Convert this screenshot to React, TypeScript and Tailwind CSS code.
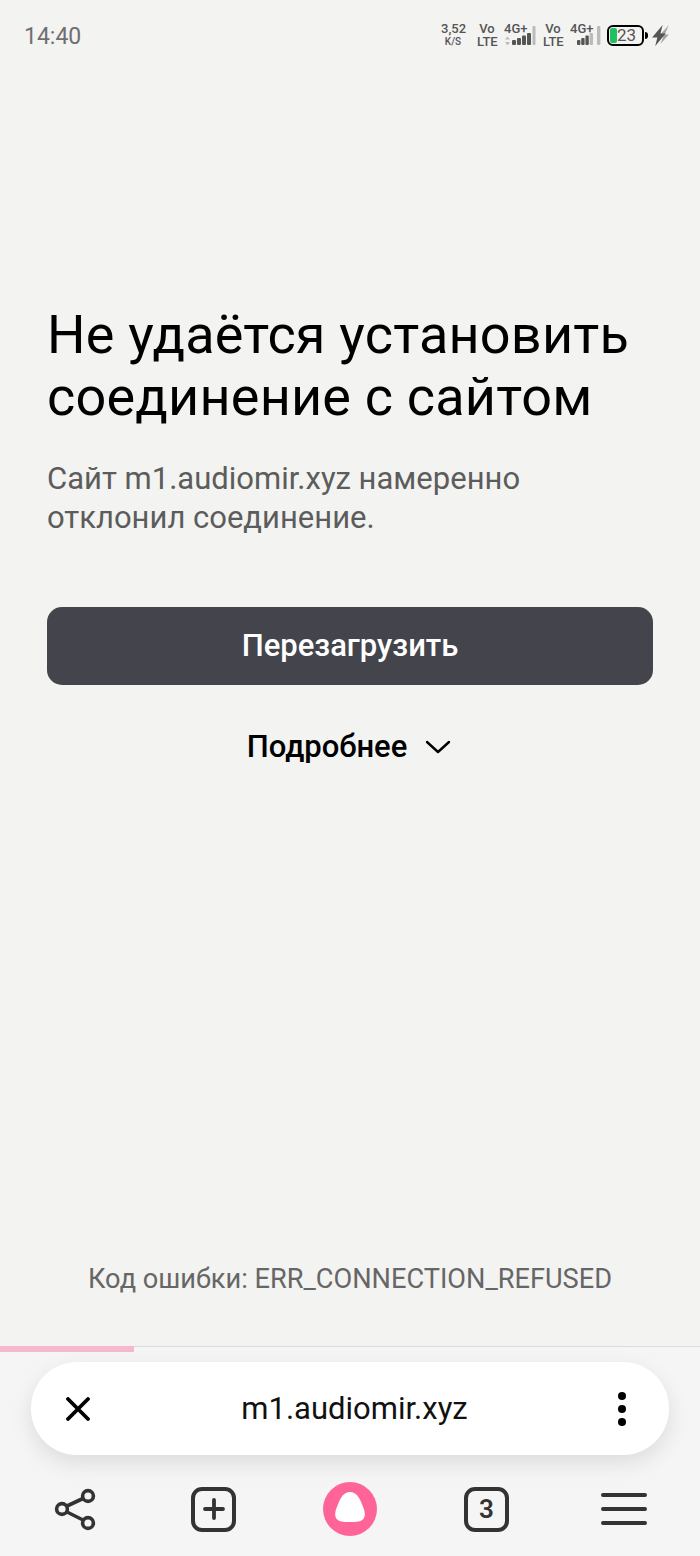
const font = "font-['Roboto',sans-serif]";

const Signal = ({ first }: { first: boolean }) => (
  <div className="relative ml-[7px] h-[26px] w-[32px]">
    <span className="absolute left-0 top-0">4G+</span>
    <svg className="absolute left-0 top-0" width="32" height="26" viewBox="0 0 32 26">
      {first ? (
        <>
          <path d="M3.5 14.5 L6 17.5 H1 Z M3.5 23.5 L6 20 H1 Z" fill="#bbb" />
          <rect x="8" y="18" width="4" height="5" rx="1" fill="#555" />
          <rect x="13" y="16" width="4" height="7" rx="1" fill="#555" />
          <rect x="18" y="13.5" width="4" height="9.5" rx="1" fill="#555" />
          <rect x="23" y="11" width="4" height="12" rx="1" fill="#555" />
          <rect x="28.5" y="4" width="3" height="19" rx="1" fill="#bbb" />
        </>
      ) : (
        <>
          <rect x="7" y="18" width="3.4" height="5" rx="1" fill="#555" />
          <rect x="11.2" y="16" width="3.4" height="7" rx="1" fill="#555" />
          <rect x="15.4" y="13.5" width="3.4" height="9.5" rx="1" fill="#555" />
          <rect x="19.6" y="11" width="3.4" height="12" rx="1" fill="#bbb" />
          <rect x="27" y="4" width="3.4" height="19" rx="1" fill="#bbb" />
        </>
      )}
    </svg>
  </div>
);

const StatusBar = () => (
  <div className="flex h-[70px] items-center justify-between pl-6 pr-[31px]">
    <span className="mt-[2px] text-[23px] leading-none text-[#6f6f6f]">14:40</span>
    <div className="flex items-center text-[#555] text-[13px] leading-[13px] font-medium">
      <div className="w-[24px] text-center whitespace-nowrap">
        3,52
        <div className="text-[10px] leading-[13px]">K/S</div>
      </div>
      <div className="ml-[12px] w-[20px] text-center">Vo<br />LTE</div>
      <Signal first />
      <div className="ml-[7px] w-[20px] text-center">Vo<br />LTE</div>
      <Signal first={false} />
      <div className="relative ml-[5px] flex h-[21px] w-[37px] items-center rounded-[6px] border-2 border-black">
        <div className="ml-[1px] h-[15px] w-[7px] rounded-[2px] bg-[#22c063]" />
        <span className="absolute left-[8px] text-[17px] font-normal leading-none text-[#555]">23</span>
      </div>
      <div className="ml-[1px] h-[7px] w-[3px] rounded-r-sm bg-black" />
      <svg className="ml-[4px]" width="17" height="21" viewBox="0 0 16 20">
        <path d="M16 0 L7 10 H11 L8 18 L16 9 H12 Z" fill="#a5a5a5" />
        <path d="M10 0 L0 12 H5 L3 20 L13 8 H8 Z" fill="#555" />
      </svg>
    </div>
  </div>
);

const Address = () => (
  <div className="relative z-10 mx-[31px] mt-[10px] flex h-[93px] items-center justify-between rounded-[46px] bg-white pl-[35px] pr-[43px] shadow-[0_8px_22px_rgba(0,0,0,0.10)]">
    <svg width="24" height="24" viewBox="0 0 24 24" fill="none" stroke="#000" strokeWidth="3.8" strokeLinecap="round">
      <path d="M2 2 L22 22 M22 2 L2 22" />
    </svg>
    <span className="ml-[1px] text-[31px] leading-none text-[#111]">m1.audiomir.xyz</span>
    <div className="flex flex-col gap-[5px]">
      <div className="h-[8px] w-[8px] rounded-full bg-black" />
      <div className="h-[8px] w-[8px] rounded-full bg-black" />
      <div className="h-[8px] w-[8px] rounded-full bg-black" />
    </div>
  </div>
);

const Toolbar = () => (
  <div className="mt-[27px] flex items-center pl-[54px] text-[#333]">
    <svg width="44" height="44" viewBox="0 0 44 44" fill="none" stroke="#333" strokeWidth="3.6">
      <circle cx="34" cy="9" r="5.4" />
      <circle cx="8" cy="22" r="5.4" />
      <circle cx="34" cy="36" r="5.4" />
      <path d="M13 19 L29 11.5 M13 25 L29 33" />
    </svg>
    <div className="ml-[93px] flex h-[45px] w-[45px] items-center justify-center rounded-[11px] border-[4px] border-[#333]">
      <svg width="22" height="22" viewBox="0 0 22 22" stroke="#333" strokeWidth="3.8" strokeLinecap="round">
        <path d="M11 2 V20 M2 11 H20" />
      </svg>
    </div>
    <svg className="ml-[87px]" width="54" height="54" viewBox="0 0 54 54">
      <circle cx="27" cy="27" r="27" fill="#ff6498" />
      <path d="M27 10 C33 10 36 15 38.5 21 C41 27 43 32 41 36 C39 40 33 40 27 40 C21 40 15 40 13 36 C11 32 13 27 15.5 21 C18 15 21 10 27 10 Z" fill="#fff" />
    </svg>
    <div className="ml-[87px] flex h-[45px] w-[45px] items-center justify-center rounded-[11px] border-[4px] border-[#333] text-[26px] font-semibold leading-none">3</div>
    <div className="ml-[92px] flex w-[46px] flex-col gap-[10px]">
      <div className="h-[4px] rounded-full bg-[#333]" />
      <div className="h-[4px] rounded-full bg-[#333]" />
      <div className="h-[4px] rounded-full bg-[#333]" />
    </div>
  </div>
);

export default function App() {
  return (
    <div className={`flex h-[1556px] w-[700px] flex-col overflow-hidden bg-[#f3f3f1] ${font}`}>
      <StatusBar />
      <div className="flex-1 px-[47px] pt-[234px]">
        <h1 className="text-[54px] font-normal leading-[62px] text-black tracking-[0.2px] whitespace-nowrap">
          Не удаётся установить
          <br />
          соединение с сайтом
        </h1>
        <p className="mt-[31px] text-[31px] leading-[39px] text-[#5c5c5c]">
          Сайт m1.audiomir.xyz намеренно
          <br />
          отклонил соединение.
        </p>
        <button className="mt-[70px] flex h-[78px] w-[606px] items-center justify-center rounded-[15px] bg-[#43444c] text-[31px] font-medium text-white">
          Перезагрузить
        </button>
        <div className="mt-[42px] flex items-center justify-center gap-[18px] pr-[2px] text-[31px] font-medium leading-[40px] text-black">
          Подробнее
          <svg width="26" height="14" viewBox="0 0 26 14" fill="none" stroke="#000" strokeWidth="2.4" strokeLinecap="round" strokeLinejoin="round">
            <path d="M2 2 L13 12 L24 2" />
          </svg>
        </div>
      </div>
      <div className="mb-[49px] text-center text-[27.2px] leading-[36px] text-[#666]">
        Код ошибки: ERR_CONNECTION_REFUSED
      </div>
      <div className="h-[210px] bg-[#f5f5f5]">
        <div className="relative h-[6px]">
          <div className="absolute inset-x-0 top-0 h-px bg-[#dcdcdc]" />
          <div className="absolute left-0 top-0 h-[6px] w-[134px] bg-[#f5b8cc]" />
        </div>
        <Address />
        <Toolbar />
      </div>
    </div>
  );
}
